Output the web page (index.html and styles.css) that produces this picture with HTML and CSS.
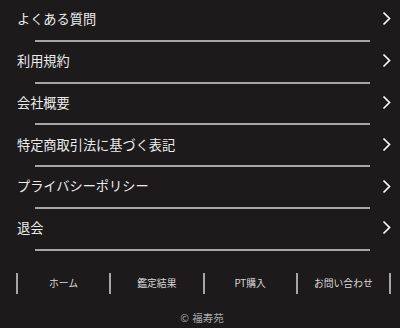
FILE: index.html
```html
<!DOCTYPE html>
<html lang="ja">
<head>
<meta charset="utf-8">
<link rel="stylesheet" href="styles.css">
</head>
<body>
<ul class="menu">
  <li class="item"><div class="row"><span class="label">よくある質問</span><svg class="chev" width="9" height="15" viewBox="0 0 9 15"><polyline points="1.5,1.5 7.5,7.5 1.5,13.5" fill="none" stroke="#fff" stroke-width="1.7"/></svg></div><div class="rule"></div></li>
  <li class="item"><div class="row"><span class="label">利用規約</span><svg class="chev" width="9" height="15" viewBox="0 0 9 15"><polyline points="1.5,1.5 7.5,7.5 1.5,13.5" fill="none" stroke="#fff" stroke-width="1.7"/></svg></div><div class="rule"></div></li>
  <li class="item"><div class="row"><span class="label">会社概要</span><svg class="chev" width="9" height="15" viewBox="0 0 9 15"><polyline points="1.5,1.5 7.5,7.5 1.5,13.5" fill="none" stroke="#fff" stroke-width="1.7"/></svg></div><div class="rule"></div></li>
  <li class="item"><div class="row"><span class="label">特定商取引法に基づく表記</span><svg class="chev" width="9" height="15" viewBox="0 0 9 15"><polyline points="1.5,1.5 7.5,7.5 1.5,13.5" fill="none" stroke="#fff" stroke-width="1.7"/></svg></div><div class="rule"></div></li>
  <li class="item"><div class="row"><span class="label">プライバシーポリシー</span><svg class="chev" width="9" height="15" viewBox="0 0 9 15"><polyline points="1.5,1.5 7.5,7.5 1.5,13.5" fill="none" stroke="#fff" stroke-width="1.7"/></svg></div><div class="rule"></div></li>
  <li class="item"><div class="row"><span class="label">退会</span><svg class="chev" width="9" height="15" viewBox="0 0 9 15"><polyline points="1.5,1.5 7.5,7.5 1.5,13.5" fill="none" stroke="#fff" stroke-width="1.7"/></svg></div><div class="rule"></div></li>
</ul>
<nav class="footnav">
  <a class="fn">ホーム</a>
  <a class="fn">鑑定結果</a>
  <a class="fn">PT購入</a>
  <a class="fn last">お問い合わせ</a>
</nav>
<p class="copy">© 福寿苑</p>
</body>
</html>
```
FILE: styles.css
```css
html, body {
  margin: 0;
  padding: 0;
  background: #1c1a1b;
  height: 100%;
}
body {
  font-family: "Noto Sans CJK JP", "Noto Sans", sans-serif;
  color: #ececec;
}
.menu {
  list-style: none;
  margin: 0;
  padding: 0;
}
.item {
  display: block;
}
.row {
  height: 37.8px;
  display: flex;
  align-items: center;
  justify-content: space-between;
  padding: 0 9px 0 17px;
}
.label {
  font-size: 13.2px;
  line-height: 1;
  letter-spacing: 0;
}
.chev {
  display: block;
}
.rule {
  margin: 2px 30px 0 35px;
  height: 2px;
  background: #a6a6a6;
}
.footnav {
  display: flex;
  margin: 22px 9px 0 16px;
  border-left: 2px solid #a6a6a6;
}
.fn {
  flex: 1;
  height: 21px;
  display: flex;
  align-items: center;
  justify-content: center;
  border-right: 2px solid #a6a6a6;
  font-size: 9.8px;
  color: #d8d8d8;
}
.copy {
  margin: 17px 0 0;
  padding-left: 4px;
  text-align: center;
  font-size: 10.5px;
  color: #a8a8a8;
  line-height: 14px;
  word-spacing: 1px;
}
```
